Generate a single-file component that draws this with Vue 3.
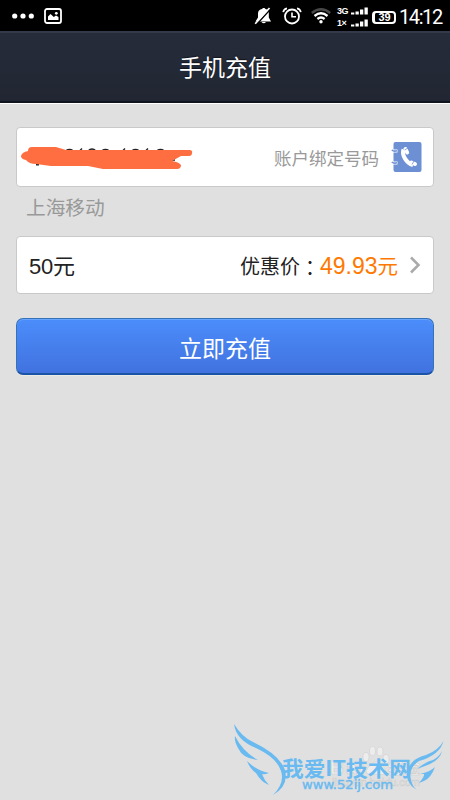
<script setup>
const signalBars = [2, 3, 5, 7]
</script>

<template>
  <main class="screen">
    <div class="status">
      <div class="status-left">
        <svg width="22" height="6" viewBox="0 0 22 6" fill="#fff"><circle cx="2.7" cy="3" r="2.6"/><circle cx="11" cy="3" r="2.6"/><circle cx="19.3" cy="3" r="2.6"/></svg>
        <svg class="photo" width="18" height="16" viewBox="0 0 18 16"><rect x="1" y="1" width="16" height="14" rx="2" fill="none" stroke="#fff" stroke-width="1.8"/><path d="M4 12V8.5L6.5 6l3.3 3 2.2-1.5 2.5 1.5v3z" fill="#fff"/><circle cx="12.3" cy="5.3" r="1.4" fill="#fff"/></svg>
      </div>
      <div class="status-right">
        <svg class="bell" width="18" height="18" viewBox="0 0 18 18"><path d="M1.500 14.500 4 10.500V6.500C4 4 5.500 2.500 8 2 8.500.5 11 .5 11.500 2c2.200.5 3.300 2 3.300 4.500v4l2.200 4zM7.500 15h4.500q-2.200 2.500-4.500 0" fill="#fff"/><path d="M2.500 17.500 16.500 2" stroke="#000" stroke-width="1.600"/><path d="M1.200 16.800 15.500 1" stroke="#fff" stroke-width="1.700"/></svg>
        <svg class="alarm" width="20" height="18" viewBox="0 0 20 18" fill="none" stroke="#fff"><circle cx="10" cy="9.500" r="7" stroke-width="1.800"/><path d="M10 5.500v4.200h4" stroke-width="1.600"/><path d="M1.200 5.200Q1.700 2 5 1.300M18.800 5.200Q18.300 2 15 1.300" stroke-width="1.700"/></svg>
        <svg class="wifi" width="20" height="16" viewBox="0 0 20 16" fill="none" stroke="#fff" stroke-width="2.300"><path d="M.8 5Q10-2.500 19.200 5" stroke="#484848"/><path d="M3.500 8Q10 2.500 16.500 8"/><path d="M6.400 11Q10 8 13.600 11"/><circle cx="10" cy="13.800" r="1.700" fill="#fff" stroke="none"/></svg>
        <div class="networks">
          <div v-for="name in ['3G', '1×']" :key="name" class="network">
            <span>{{ name }}</span>
            <svg width="17" height="8" viewBox="0 0 17 8" fill="#fff"><rect v-for="(h, i) in signalBars" :key="i" :x="i * 4.500" :y="7.500 - h" width="3.300" :height="h"/></svg>
          </div>
        </div>
        <div class="battery"><span>39</span></div>
        <span class="clock">14:12</span>
      </div>
    </div>

    <header class="header">手机充值</header>

    <section class="content">
      <div class="card phone">
        <svg class="scribble" width="172" height="26" viewBox="0 0 172 26">
          <path d="M15 18.500h3M23 18h6" stroke="#222" stroke-width="2" fill="none"/>
          <path d="M45 4.500q3.500-2 7 0M59 4.500l2-2M67 5q4-4 8 0M81 4.500q3.500-2 7 0M102 4.500l2-2M111 4.500q3.500-2 7 0M125 4.500l2-2M136 4.500q3.500-2 7 0M151 14h3" stroke="#222" stroke-width="1.400" fill="none"/>
          <path d="M0 10Q1 6 7 5Q7 1 11 1H35L45 4H169Q172 5 171 7Q171 10 168 10H160L151 15Q158 16 160 19Q160 23 156 23H82L67 20H30L15 18Q8 18 5 14Q0 13 0 10Z" fill="#ff6e40"/>
        </svg>
        <span class="bound">账户绑定号码</span>
        <svg class="contact" width="32" height="32" viewBox="0 0 32 32">
          <rect x="2.500" y="1" width="28" height="30" rx="2" fill="#6d8fd3"/>
          <path d="M2 10h4.500M2 22h4.500" stroke="#fff" stroke-width="3"/>
          <path d="M.8 9q2 1.800 5.200.8M.8 21q2 1.800 5.200.8" stroke="#6d8fd3" stroke-width="1.600" fill="none"/>
          <path d="M12.500 8.500C10.500 13.500 15 22 22 24" fill="none" stroke="#fff" stroke-width="4"/>
          <path d="M14.500 8l1.700 3.500M20.500 21.500l3.500 1.500" stroke="#fff" stroke-width="4" stroke-linecap="round"/>
          <path d="M13.500 9l3.500-2M21 23.500l2-3.500" stroke="#6d8fd3" stroke-width=".8"/>
        </svg>
      </div>
      <p class="carrier">上海移动</p>
      <div class="card amount">
        <span class="value">50元</span>
        <span class="price"><span class="price-label">优惠价<span class="colon">：</span></span><strong>49.93<span class="unit">元</span></strong></span>
        <svg class="chevron" width="12" height="18" viewBox="0 0 12 18"><path d="M2 1.500 9.500 9 2 16.500" fill="none" stroke="#aaa" stroke-width="2.500"/></svg>
      </div>
      <button class="submit">立即充值</button>
    </section>

    <svg class="watermark" width="225" height="85" viewBox="225 715 225 85">
      <g fill="#ededed" stroke="#cfcfcf" stroke-width=".6">
        <ellipse cx="366" cy="757" rx="3" ry="4.500"/><ellipse cx="372.500" cy="751" rx="3" ry="4.500"/><ellipse cx="380" cy="751.500" rx="3" ry="4.500"/><ellipse cx="386" cy="759" rx="3" ry="4.500"/><path d="M366 771q2-5 6-7 4-4 8 0 6 4 6 8-2 4-8 2-12 2-12-3z"/>
        <text class="baidu" x="330" y="774" textLength="34">Bai</text>
        <text class="baidu-cn" x="388" y="774" textLength="32">经验</text>
        <text class="domain" x="332" y="786" textLength="88">jingyan.baidu.com</text>
      </g>
      <g fill="#69baf0">
        <path d="M234 724Q242 737 253 742Q279 754 285 770Q289 786 273 795Q285 783 281 771Q277 758 256 748Q236 740 234 724Z"/>
        <path d="M235 736Q243 752 258 760Q243 759 238 748Q234 741 235 736Z"/>
        <path d="M247 761Q257 771 269 773Q264 775 262 774Q264 780 269 785Q261 782 256 773Q250 769 247 761Z"/>
        <path d="M443.500 741Q440 755 419 761Q408 768 411 780Q412 786 417 790Q406 784 407 772Q410 759 426 755Q439 750 443.500 741Z"/>
        <path d="M442 751Q440 761 425 766L417 769Q425 762 433 760Q439 757 442 751Z"/>
        <path d="M435 767Q431 778 424 781L419 783Q425 776 424 774L420 774Q430 772 435 767Z"/>
        <text class="brand" x="282" y="775.500" textLength="129" lengthAdjust="spacingAndGlyphs">我爱IT技术网</text>
        <text class="url" x="302" y="789" textLength="91" lengthAdjust="spacingAndGlyphs">www.52ij.com</text>
      </g>
    </svg>
  </main>
</template>

<style>
body { margin: 0; background: #e0e0e0; }
</style>

<style scoped>
* { box-sizing: border-box; }
.screen { width: 450px; height: 800px; position: relative; overflow: hidden; background: #e0e0e0; font-family: "Liberation Sans", "Noto Sans CJK SC", sans-serif; }
svg { display: block; flex: none; }
.status { height: 31px; background: #000; color: #fff; display: flex; justify-content: space-between; padding: 0 8px 0 12px; }
.status-left, .status-right { display: flex; align-items: center; height: 32px; }
.photo { margin-left: 10px; }
.alarm { margin-left: 10px; }
.wifi { margin-left: 9px; }
.networks { margin-left: 6px; display: grid; gap: 4px; padding-top: 2px; }
.network { display: flex; width: 31px; height: 8px; justify-content: space-between; font: bold 9px/8px "Liberation Sans", sans-serif; }
.network span { letter-spacing: -.5px; }
.battery { margin: 2px 0 0 4px; width: 24px; height: 13px; border: 2px solid #fff; border-left-width: 3px; border-radius: 4px; font: bold 11px/9px "Liberation Sans", sans-serif; text-align: center; }
.clock { font: 20px/32px Roboto, sans-serif; width: 44px; margin-left: 3px; padding-top: 2px; letter-spacing: -1.400px; white-space: nowrap; }
.status-right { margin-right: -1px; }
.header { height: 72px; background: linear-gradient(#272c3b, #212632); border-top: 2px solid #343a49; border-bottom: 2px solid #10141e; color: #fff; text-align: center; font-size: 23px; line-height: 70px; text-shadow: 0 -1px 1px #0008; box-shadow: 0 1px 0 #fff; }
.content { padding: 24px 16px 0; }
.card { background: #fff; border: 1px solid #c9c9c9; border-radius: 4px; display: flex; align-items: center; }
.phone { height: 60px; padding: 0 10px 0 4px; }
.scribble { margin-top: 4px; }
.bound { margin-left: auto; font-size: 17.500px; color: #999; }
.contact { margin-left: 12px; }
.carrier { margin: 0; height: 49px; padding: 6px 10px; font-size: 19.700px; line-height: 31px; color: #999; }
.amount { height: 58px; padding: 0 12px; font-size: 20px; color: #222; }
.value { font: 22px "Liberation Sans", "Noto Sans CJK SC", sans-serif; letter-spacing: -.2px; padding-bottom: 3px; }
.price { margin-left: auto; display: flex; align-items: baseline; white-space: nowrap; }
.price-label { width: 80px; }
.colon { font-family: "Noto Sans CJK TC", sans-serif; position: relative; top: 2px; }
.price strong { font-weight: 400; color: #ff7900; font-size: 23px; width: 78px; }
.unit { font-size: 20.500px; }
.chevron { margin-left: 11px; }
.submit { display: block; width: 100%; height: 57px; margin: 24px 0 0; padding: 5px 0 0; border: 1px solid #3672b8; border-bottom: 2px solid #1c54a5; border-radius: 7px; color: #fff; background: linear-gradient(#4b8dfb, #4172df); font: 23px/50px "Liberation Sans", "Noto Sans CJK SC", sans-serif; box-shadow: inset 0 1px #68a5ff, 0 1px #ecece6; }
.watermark { position: absolute; right: 0; bottom: 0; }
.brand { font: bold 21px "Noto Sans CJK SC", sans-serif; }
.url { font: 12.500px "DejaVu Sans", sans-serif; stroke: #69baf0; stroke-width: .4px; }
.baidu { font: bold 19px "Liberation Sans", sans-serif; }
.baidu-cn { font: bold 16px "Noto Sans CJK SC", sans-serif; }
.domain { font: 11px "Liberation Sans", sans-serif; }
</style>
